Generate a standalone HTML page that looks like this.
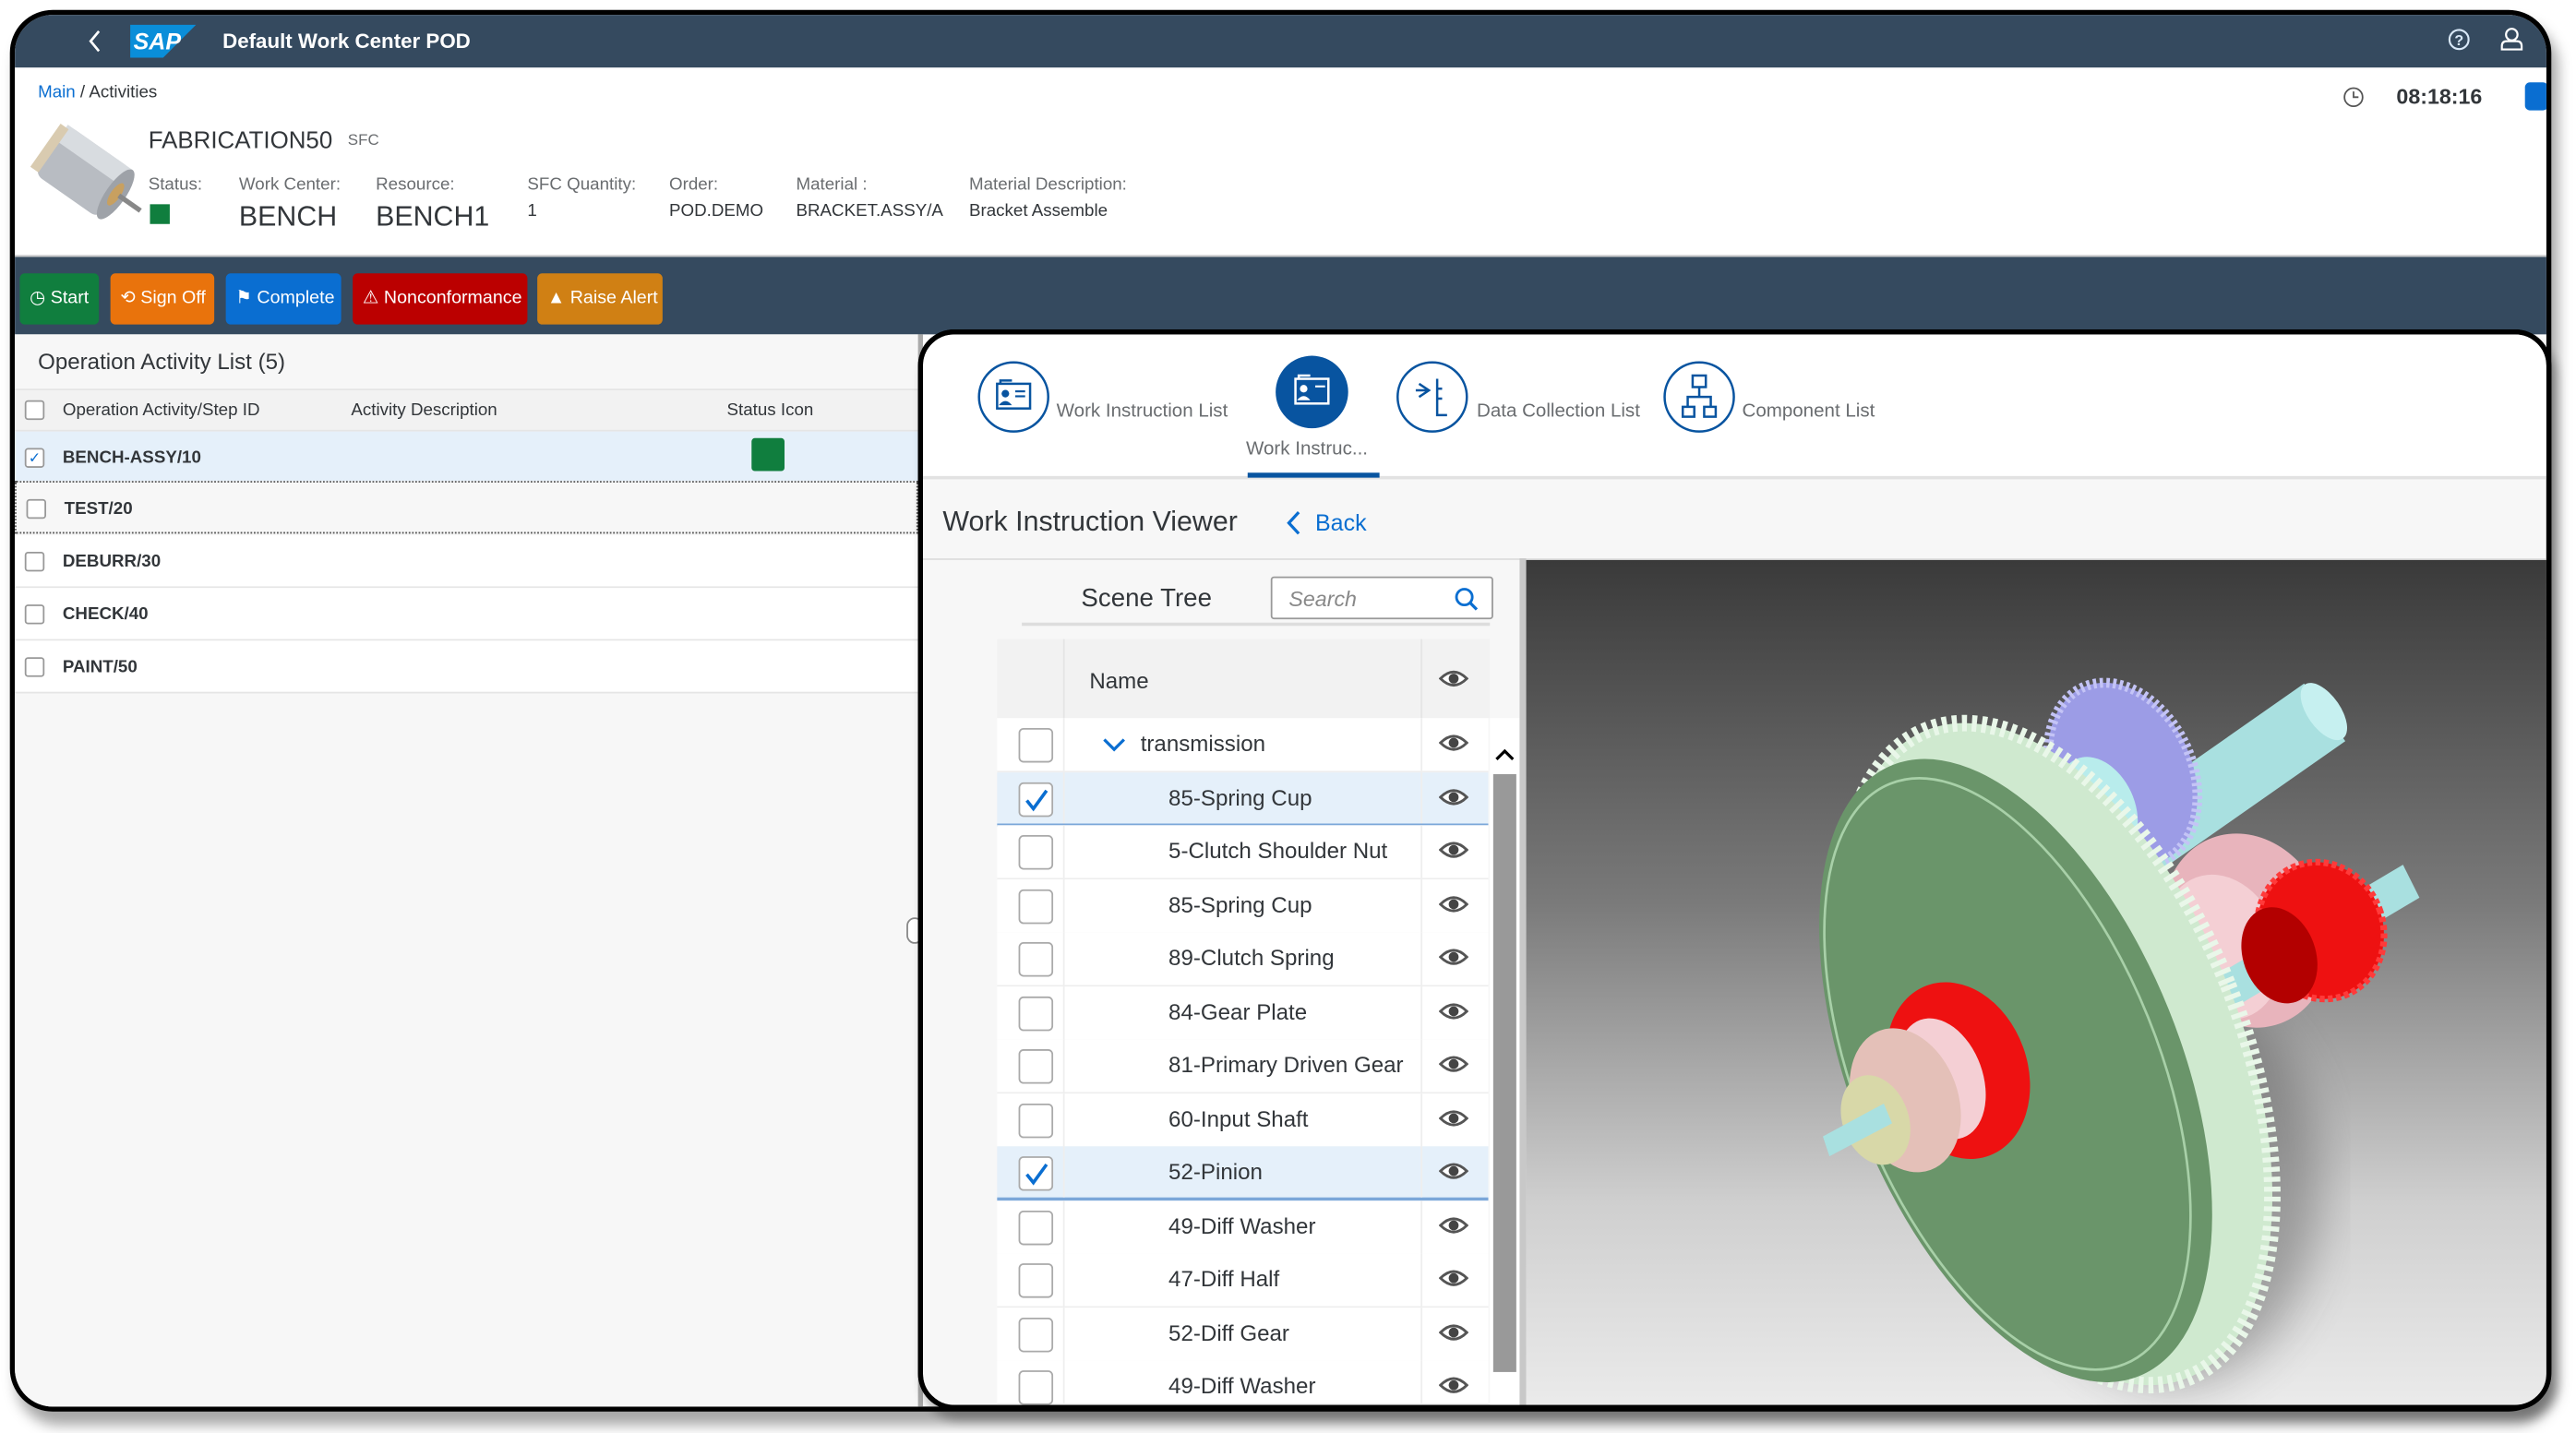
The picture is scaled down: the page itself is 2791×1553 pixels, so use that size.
<!DOCTYPE html>
<html><head><meta charset="utf-8">
<style>
*{box-sizing:border-box;margin:0;padding:0}
html,body{width:2791px;height:1553px;overflow:hidden;background:#fff;font-family:"Liberation Sans",sans-serif;}
#s{position:absolute;left:0;top:0;width:1563px;height:870px;transform:scale(1.7857,1.785);transform-origin:0 0;}
.a{position:absolute}
.t{position:absolute;white-space:nowrap}
.frame{left:6px;top:6px;width:1542px;height:851px;border:3px solid #000;border-radius:26px;overflow:hidden;background:#fff;box-shadow:4px 8px 8px rgba(0,0,0,.35)}
.btn{position:absolute;top:157px;height:31px;border-radius:3px;color:#fff;font-size:11px;line-height:31px;padding-left:6px}
.lbl{font-size:10.5px;color:#6a6d70;top:97px}
.row{position:absolute;left:9px;width:548px;height:32px;border-bottom:1px solid #e5e5e5;background:#fff}
.cb{position:absolute;width:12px;height:12px;border:1px solid #999;border-radius:2px;background:#fff}
.rt{position:absolute;left:29px;font-size:10.5px;font-weight:bold;color:#32363a;top:10px}
.sr{position:absolute;left:605px;width:298px;height:32.5px;background:#fff;border-bottom:1px solid #eee}
.sr .c{position:absolute;left:13px;top:6px;width:21px;height:21px;border:1.5px solid #aaa;border-radius:3px;background:#fff}
.sr .n{position:absolute;left:104px;top:8px;font-size:13.5px;color:#32363a}
.sr .v1{position:absolute;left:40px;top:0;width:1px;height:100%;background:#eee}
.sr .v2{position:absolute;left:257px;top:0;width:1px;height:100%;background:#eee}
.sr svg{position:absolute;left:268px;top:9px}
.sel{background:#e5f0fa;border-bottom:2px solid #7ba7d9}
</style></head><body><div id="s">
<div class="a frame">
 <div class="a" style="left:0;top:0;width:1545px;height:32px;background:#354a5f"></div>
 <svg class="a" style="left:44px;top:9px" width="10" height="14"><path d="M7 1 L2 7 L7 13" stroke="#fff" stroke-width="1.5" fill="none"/></svg>
 <svg class="a" style="left:70px;top:6px" width="40" height="20"><path d="M0 0 H40 L20 20 H0 Z" fill="#0a8ed9"/><text x="2" y="15" font-family="Liberation Sans" font-weight="bold" font-style="italic" font-size="14" fill="#fff">SAP</text></svg>
 <div class="t" style="left:126px;top:9px;color:#fff;font-weight:bold;font-size:12.5px">Default Work Center POD</div>
 <svg class="a" style="left:1476px;top:8px" width="14" height="14"><circle cx="7" cy="7" r="5.8" stroke="#d8e8f8" stroke-width="1.2" fill="none"/><text x="7" y="10.5" text-anchor="middle" font-size="9" font-weight="bold" fill="#d8e8f8" font-family="Liberation Sans">?</text></svg>
 <svg class="a" style="left:1508px;top:7px" width="14" height="16"><circle cx="7" cy="5" r="3.5" stroke="#fff" stroke-width="1.2" fill="none"/><path d="M1 14 V12 Q1 9 4 9 H10 Q13 9 13 12 V14 Z" stroke="#fff" stroke-width="1.2" fill="none"/></svg>
 <div class="t" style="left:14px;top:41px;font-size:10.5px;color:#32363a"><span style="color:#0a6ed1">Main</span> / Activities</div>
 <svg class="a" style="left:1412px;top:43px" width="14" height="14"><circle cx="7" cy="7" r="5.5" stroke="#555" stroke-width="1" fill="none"/><path d="M7 3.5 V7 H10" stroke="#555" stroke-width="1" fill="none"/></svg>
 <div class="t" style="left:1445px;top:42px;font-size:13px;font-weight:bold;color:#32363a">08:18:16</div>
 <div class="a" style="left:1523px;top:41px;width:14px;height:17px;background:#0a6ed1;border-radius:3px"></div>
 <svg class="a" style="left:2px;top:66px" width="80" height="64">
  <g transform="rotate(35 40 32)"><rect x="14" y="12" width="48" height="36" rx="6" fill="#b8bcc2"/><rect x="14" y="12" width="48" height="12" fill="#d8dce0"/><rect x="10" y="14" width="6" height="32" fill="#d9cbb0"/><ellipse cx="62" cy="30" rx="6" ry="18" fill="#9ea2a8"/><ellipse cx="62" cy="30" rx="3" ry="8" fill="#c8a060"/><rect x="64" y="28" width="16" height="3" fill="#888"/></g>
 </svg>
 <div class="t" style="left:81px;top:69px;font-size:14.5px;color:#32363a">FABRICATION50</div>
 <div class="t" style="left:202px;top:71px;font-size:9.5px;color:#6a6d70">SFC</div>
 <div class="t lbl" style="left:81px">Status:</div>
 <div class="t lbl" style="left:136px">Work Center:</div>
 <div class="t lbl" style="left:219px">Resource:</div>
 <div class="t lbl" style="left:311px">SFC Quantity:</div>
 <div class="t lbl" style="left:397px">Order:</div>
 <div class="t lbl" style="left:474px">Material :</div>
 <div class="t lbl" style="left:579px">Material Description:</div>
 <div class="a" style="left:82px;top:115px;width:12px;height:12px;background:#107e3e"></div>
 <div class="t" style="left:136px;top:113px;font-size:17px;color:#32363a">BENCH</div>
 <div class="t" style="left:219px;top:113px;font-size:17px;color:#32363a">BENCH1</div>
 <div class="t" style="left:311px;top:113px;font-size:10.5px;color:#32363a">1</div>
 <div class="t" style="left:397px;top:113px;font-size:10.5px;color:#32363a">POD.DEMO</div>
 <div class="t" style="left:474px;top:113px;font-size:10.5px;color:#32363a">BRACKET.ASSY/A</div>
 <div class="t" style="left:579px;top:113px;font-size:10.5px;color:#32363a">Bracket Assemble</div>
 <div class="a" style="left:0;top:146px;width:1545px;height:48px;background:#354a5f;border-top:1px solid #ccc"></div>
 <div class="btn" style="left:3px;width:48px;background:#107e3e">◷ Start</div>
 <div class="btn" style="left:58px;width:63px;background:#e9730c">⟲ Sign Off</div>
 <div class="btn" style="left:128px;width:70px;background:#0a6ed1">⚑ Complete</div>
 <div class="btn" style="left:205px;width:106px;background:#bb0000">⚠ Nonconformance</div>
 <div class="btn" style="left:317px;width:76px;background:#d08014">▲ Raise Alert</div>
 <div class="a" style="left:0;top:194px;width:548px;height:660px;background:#f7f7f7"></div>
 <div class="a" style="left:548px;top:194px;width:3px;height:660px;background:#aaa"></div>
 <div class="t" style="left:14px;top:203px;font-size:13.5px;color:#32363a">Operation Activity List (5)</div>
 <div class="a" style="left:0;top:227px;width:548px;height:26px;background:#f2f2f2;border-top:1px solid #e5e5e5;border-bottom:1px solid #e5e5e5"></div>
 <div class="cb" style="left:6px;top:234px"></div>
 <div class="t" style="left:29px;top:234px;font-size:10.5px;color:#32363a">Operation Activity/Step ID</div>
 <div class="t" style="left:204px;top:234px;font-size:10.5px;color:#32363a">Activity Description</div>
 <div class="t" style="left:432px;top:234px;font-size:10.5px;color:#32363a">Status Icon</div>
</div>
<div class="row" style="top:262px;background:#e5f0fa;border-bottom:1px solid #5a8fcf;left:9px"><div class="cb" style="left:6px;top:10px;color:#0a6ed1;font-size:9px;line-height:10px;text-align:center">✓</div><div class="rt">BENCH-ASSY/10</div><div class="a" style="left:447px;top:4px;width:20px;height:20px;background:#107e3e;border-radius:2px"></div></div>
<div class="row" style="top:292px;background:#f7f7f7;border:1px dotted #555"><div class="cb" style="left:6px;top:10px"></div><div class="rt">TEST/20</div></div>
<div class="row" style="top:325px"><div class="cb" style="left:6px;top:10px"></div><div class="rt">DEBURR/30</div></div>
<div class="row" style="top:357px"><div class="cb" style="left:6px;top:10px"></div><div class="rt">CHECK/40</div></div>
<div class="row" style="top:389px"><div class="cb" style="left:6px;top:10px"></div><div class="rt">PAINT/50</div></div>
<div class="a" style="left:550px;top:557px;width:10px;height:16px;border:1px solid #888;border-radius:8px;background:#fff"></div>

<div class="a" style="left:557px;top:200px;width:991px;height:656px;border:3px solid #000;border-radius:22px;overflow:hidden;background:#f7f7f7;box-shadow:3px 6px 6px rgba(0,0,0,.3)">
 <div class="a" style="left:0;top:0;width:991px;height:88px;background:#fff;border-bottom:2px solid #e2e2e2"></div>
 <svg class="a" style="left:0;top:0" width="991" height="90">
  <g fill="none" stroke="#0854a0" stroke-width="1.4">
   <circle cx="55" cy="38" r="21"/><circle cx="309" cy="38" r="21"/><circle cx="471" cy="38" r="21"/>
   <rect x="45" y="30" width="20" height="15"/><path d="M47 30 V28 H54"/>
   <path d="M301 30 l6 4 -6 4 M299 34 h7 M312 27 v22 h6 M312 33 h3 M312 39 h3"/>
   <rect x="467" y="25" width="8" height="7"/><rect x="461" y="44" width="7" height="6"/><rect x="474" y="44" width="7" height="6"/><path d="M471 32 v6 M464 44 v-6 h14 v6"/>
  </g>
  <g fill="#0854a0"><circle cx="50" cy="36" r="2.3"/><path d="M46 43 q4 -5 8 0 z"/><rect x="56" y="34" width="6" height="1.2"/><rect x="56" y="37" width="6" height="1.2"/></g>
  <circle cx="236" cy="35" r="22" fill="#0854a0"/>
  <g fill="none" stroke="#fff" stroke-width="1.4"><rect x="226" y="27" width="20" height="15"/><path d="M228 27 V25 H235"/></g>
  <g fill="#fff"><circle cx="231" cy="33" r="2.3"/><path d="M227 40 q4 -5 8 0 z"/><rect x="238" y="31" width="6" height="1.2"/></g>
  <rect x="197" y="84" width="80" height="3" fill="#0854a0"/>
 </svg>
 <div class="t" style="left:81px;top:41px;font-size:11.5px;color:#6a6d70">Work Instruction List</div>
 <div class="t" style="left:196px;top:64px;font-size:11.5px;color:#6a6d70">Work Instruc...</div>
 <div class="t" style="left:336px;top:41px;font-size:11.5px;color:#6a6d70">Data Collection List</div>
 <div class="t" style="left:497px;top:41px;font-size:11.5px;color:#6a6d70">Component List</div>
 <div class="t" style="left:12px;top:104px;font-size:17px;color:#32363a">Work Instruction Viewer</div>
 <svg class="a" style="left:220px;top:107px" width="10" height="15"><path d="M8 1 L2 7.5 L8 14" stroke="#0a6ed1" stroke-width="1.8" fill="none"/></svg>
 <div class="t" style="left:238px;top:106px;font-size:14px;color:#0a6ed1">Back</div>
 <div class="a" style="left:0;top:136px;width:991px;height:1px;background:#ddd"></div>
 <div class="t" style="left:96px;top:152px;font-size:15.5px;color:#32363a">Scene Tree</div>
 <div class="a" style="left:211px;top:147px;width:135px;height:26px;border:1px solid #999;border-radius:2px;background:#fff"></div>
 <div class="t" style="left:222px;top:153px;font-size:13px;color:#888;font-style:italic">Search</div>
 <svg class="a" style="left:322px;top:153px" width="16" height="16"><circle cx="6.5" cy="6.5" r="4.8" stroke="#0a6ed1" stroke-width="1.6" fill="none"/><path d="M10 10 L14 14" stroke="#0a6ed1" stroke-width="1.8"/></svg>
 <div class="a" style="left:60px;top:175px;width:284px;height:2px;background:#ddd"></div>
 <div class="a" style="left:45px;top:185px;width:299px;height:48px;background:#f2f2f2"></div>
 <div class="a" style="left:85px;top:185px;width:1px;height:48px;background:#e5e5e5"></div>
 <div class="a" style="left:302px;top:185px;width:1px;height:48px;background:#e5e5e5"></div>
 <div class="t" style="left:101px;top:203px;font-size:13.5px;color:#32363a">Name</div>
 <svg class="a" style="left:313px;top:203px" width="18" height="12"><path d="M1 6 Q9 -2 17 6 Q9 14 1 6 Z" fill="#fff" stroke="#555" stroke-width="1.6"/><circle cx="9" cy="6" r="3" fill="#444"/></svg>
 <div class="a" style="left:344px;top:233px;width:18px;height:422px;background:#fff"></div>
 <svg class="a" style="left:347px;top:250px" width="12" height="10"><path d="M1 8 L6 3 L11 8" stroke="#000" stroke-width="1.8" fill="none"/></svg>
 <div class="a" style="left:346px;top:267px;width:14px;height:363px;background:#999"></div>
 <div class="a" style="left:362px;top:136px;width:4px;height:520px;background:#c8c8c8"></div>
 <div class="a" style="left:366px;top:137px;width:622px;height:520px;background:linear-gradient(180deg,#3a3a3a 0%,#7a7a7a 40%,#cfcfcf 75%,#ececec 100%)"></div>
 <svg class="a" style="left:366px;top:137px" width="622" height="520" viewBox="928 340 622 520">
  <defs><filter id="bl"><feGaussianBlur stdDeviation="14"/></filter></defs>
  <ellipse cx="1320" cy="720" rx="90" ry="120" fill="#555" opacity=".45" filter="url(#bl)"/>
  <path d="M1250 520 L1400 415 L1425 450 L1275 555 Z" fill="#a9e0e0"/>
  <ellipse cx="1412" cy="432" rx="10" ry="20" fill="#c6f0f0" transform="rotate(-35 1412 432)"/>
  <ellipse cx="1290" cy="470" rx="42" ry="58" fill="#9c9ce6" stroke="#c4c4f6" stroke-width="6" stroke-dasharray="2 2" transform="rotate(-25 1290 470)"/>
  <ellipse cx="1275" cy="490" rx="22" ry="32" fill="#b8ecec" transform="rotate(-25 1275 490)"/>
  <ellipse cx="1365" cy="565" rx="50" ry="60" fill="#e8b4bc" transform="rotate(-20 1365 565)"/>
  <ellipse cx="1350" cy="575" rx="35" ry="45" fill="#f4cfd4" transform="rotate(-20 1350 575)"/>
  <path d="M1300 620 L1460 525 L1470 545 L1310 640 Z" fill="#a9e0e0"/>
  <ellipse cx="1410" cy="565" rx="38" ry="42" fill="#ee1111" stroke="#ff3a3a" stroke-width="4" stroke-dasharray="3 2" transform="rotate(-20 1410 565)"/>
  <ellipse cx="1385" cy="580" rx="22" ry="30" fill="#b30000" transform="rotate(-20 1385 580)"/>
  <ellipse cx="1250" cy="640" rx="112" ry="212" fill="#cfe9cf" stroke="#e9f7e9" stroke-width="10" stroke-dasharray="3 3" transform="rotate(-22 1250 640)"/>
  <ellipse cx="1225" cy="650" rx="100" ry="200" fill="#6a956a" transform="rotate(-22 1225 650)"/>
  <ellipse cx="1220" cy="652" rx="92" ry="190" fill="none" stroke="#a8d0a8" stroke-width="1.5" transform="rotate(-22 1220 652)"/>
  <ellipse cx="1190" cy="650" rx="42" ry="55" fill="#ee1111" transform="rotate(-20 1190 650)"/>
  <ellipse cx="1180" cy="655" rx="25" ry="38" fill="#f4cfd4" transform="rotate(-20 1180 655)"/>
  <ellipse cx="1158" cy="668" rx="32" ry="45" fill="#e4c0b8" transform="rotate(-20 1158 668)"/>
  <ellipse cx="1140" cy="680" rx="20" ry="28" fill="#d8d8a8" transform="rotate(-20 1140 680)"/>
  <path d="M1108 690 L1145 670 L1150 682 L1112 702 Z" fill="#a9e0e0"/>
 </svg>
</div>
<div class="sr" style="top:436px"><div class="c"></div><div class="v1"></div><div class="v2"></div><div class="n" style="left:87px">transmission</div><svg style="left:64px;top:11px" width="14" height="10"><path d="M1 2 L7 8 L13 2" stroke="#0a6ed1" stroke-width="1.8" fill="none"/></svg><svg width="18" height="12"><path d="M1 6 Q9 -2 17 6 Q9 14 1 6 Z" fill="#fff" stroke="#555" stroke-width="1.6"/><circle cx="9" cy="6" r="3" fill="#444"/></svg></div>
<div class="sr sel" style="top:469px"><div class="c"><svg style="left:2px;top:2px" width="16" height="16"><path d="M2 8 L6 13 L14 2" stroke="#0a6ed1" stroke-width="2" fill="none"/></svg></div><div class="v1"></div><div class="v2"></div><div class="n">85-Spring Cup</div><svg width="18" height="12"><path d="M1 6 Q9 -2 17 6 Q9 14 1 6 Z" fill="#fff" stroke="#555" stroke-width="1.6"/><circle cx="9" cy="6" r="3" fill="#444"/></svg></div>
<div class="sr" style="top:501px"><div class="c"></div><div class="v1"></div><div class="v2"></div><div class="n">5-Clutch Shoulder Nut</div><svg width="18" height="12"><path d="M1 6 Q9 -2 17 6 Q9 14 1 6 Z" fill="#fff" stroke="#555" stroke-width="1.6"/><circle cx="9" cy="6" r="3" fill="#444"/></svg></div>
<div class="sr" style="top:534px"><div class="c"></div><div class="v1"></div><div class="v2"></div><div class="n">85-Spring Cup</div><svg width="18" height="12"><path d="M1 6 Q9 -2 17 6 Q9 14 1 6 Z" fill="#fff" stroke="#555" stroke-width="1.6"/><circle cx="9" cy="6" r="3" fill="#444"/></svg></div>
<div class="sr" style="top:566px"><div class="c"></div><div class="v1"></div><div class="v2"></div><div class="n">89-Clutch Spring</div><svg width="18" height="12"><path d="M1 6 Q9 -2 17 6 Q9 14 1 6 Z" fill="#fff" stroke="#555" stroke-width="1.6"/><circle cx="9" cy="6" r="3" fill="#444"/></svg></div>
<div class="sr" style="top:599px"><div class="c"></div><div class="v1"></div><div class="v2"></div><div class="n">84-Gear Plate</div><svg width="18" height="12"><path d="M1 6 Q9 -2 17 6 Q9 14 1 6 Z" fill="#fff" stroke="#555" stroke-width="1.6"/><circle cx="9" cy="6" r="3" fill="#444"/></svg></div>
<div class="sr" style="top:631px"><div class="c"></div><div class="v1"></div><div class="v2"></div><div class="n">81-Primary Driven Gear</div><svg width="18" height="12"><path d="M1 6 Q9 -2 17 6 Q9 14 1 6 Z" fill="#fff" stroke="#555" stroke-width="1.6"/><circle cx="9" cy="6" r="3" fill="#444"/></svg></div>
<div class="sr" style="top:664px"><div class="c"></div><div class="v1"></div><div class="v2"></div><div class="n">60-Input Shaft</div><svg width="18" height="12"><path d="M1 6 Q9 -2 17 6 Q9 14 1 6 Z" fill="#fff" stroke="#555" stroke-width="1.6"/><circle cx="9" cy="6" r="3" fill="#444"/></svg></div>
<div class="sr sel" style="top:696px"><div class="c"><svg style="left:2px;top:2px" width="16" height="16"><path d="M2 8 L6 13 L14 2" stroke="#0a6ed1" stroke-width="2" fill="none"/></svg></div><div class="v1"></div><div class="v2"></div><div class="n">52-Pinion</div><svg width="18" height="12"><path d="M1 6 Q9 -2 17 6 Q9 14 1 6 Z" fill="#fff" stroke="#555" stroke-width="1.6"/><circle cx="9" cy="6" r="3" fill="#444"/></svg></div>
<div class="sr" style="top:729px"><div class="c"></div><div class="v1"></div><div class="v2"></div><div class="n">49-Diff Washer</div><svg width="18" height="12"><path d="M1 6 Q9 -2 17 6 Q9 14 1 6 Z" fill="#fff" stroke="#555" stroke-width="1.6"/><circle cx="9" cy="6" r="3" fill="#444"/></svg></div>
<div class="sr" style="top:761px"><div class="c"></div><div class="v1"></div><div class="v2"></div><div class="n">47-Diff Half</div><svg width="18" height="12"><path d="M1 6 Q9 -2 17 6 Q9 14 1 6 Z" fill="#fff" stroke="#555" stroke-width="1.6"/><circle cx="9" cy="6" r="3" fill="#444"/></svg></div>
<div class="sr" style="top:794px"><div class="c"></div><div class="v1"></div><div class="v2"></div><div class="n">52-Diff Gear</div><svg width="18" height="12"><path d="M1 6 Q9 -2 17 6 Q9 14 1 6 Z" fill="#fff" stroke="#555" stroke-width="1.6"/><circle cx="9" cy="6" r="3" fill="#444"/></svg></div>
<div class="sr" style="top:826px;height:27px"><div class="c"></div><div class="v1"></div><div class="v2"></div><div class="n">49-Diff Washer</div><svg width="18" height="12"><path d="M1 6 Q9 -2 17 6 Q9 14 1 6 Z" fill="#fff" stroke="#555" stroke-width="1.6"/><circle cx="9" cy="6" r="3" fill="#444"/></svg></div>
<div class="a" style="left:557px;top:200px;width:991px;height:656px;border:3px solid #000;border-radius:22px;pointer-events:none"></div>
</div></body></html>
